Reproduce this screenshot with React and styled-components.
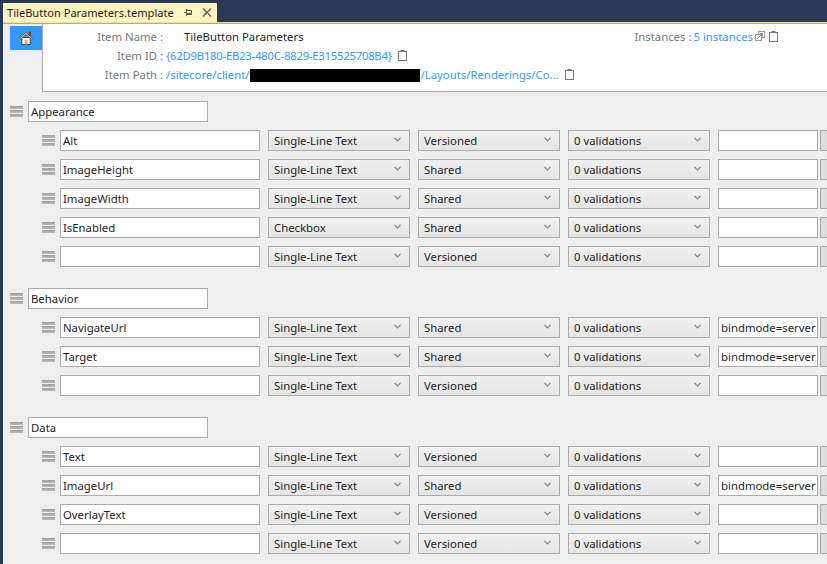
import React from 'react'
import styled, { createGlobalStyle } from 'styled-components'

const GlobalStyle = createGlobalStyle`
  html, body {
    margin: 0;
    padding: 0;
    height: 100%;
    overflow: hidden;
    background: #2a3a56;
  }
  #root { height: 100%; }
`

const Window = styled.div`
  width: 827px;
  height: 564px;
  display: flex;
  flex-direction: column;
  overflow: hidden;
  background: #2a3a56;
  font-family: "Noto Sans", "Open Sans", sans-serif;
  font-size: 11.35px;
  color: #1e1e1e;
`

const TabStrip = styled.div`
  height: 22px;
  flex: none;
  padding: 3px 0 0 3px;
  box-sizing: border-box;
`

const Tab = styled.div`
  width: 214px;
  height: 19px;
  box-sizing: border-box;
  background: #fdf4bf;
  color: #1e1e1e;
  display: flex;
  align-items: center;
  padding-left: 4px;
  white-space: nowrap;
  font-size: 11.1px;
`

const TabTitle = styled.span`
  flex: 1;
`

const TabIcons = styled.span`
  display: flex;
  align-items: center;
  gap: 10px;
  margin-right: 5px;
`

const Content = styled.div`
  flex: 1;
  margin-left: 3px;
  background: #eeeeee;
  border-top: 1px solid #f1e27c;
  box-shadow: inset 0 1px 0 #aaaaaa;
  min-height: 0;
  overflow: hidden;
`

const Header = styled.div`
  display: flex;
  margin: 1px 0 0 7px;
  align-items: flex-start;
`

const HomeButton = styled.div`
  width: 32px;
  height: 24px;
  margin-top: 2px;
  background: #3399ff;
  display: flex;
  align-items: center;
  justify-content: center;
  flex: none;
`

const InfoBox = styled.div`
  flex: 1;
  height: 68px;
  box-sizing: border-box;
  background: #fff;
  border-left: 1px solid #aaaaaa;
  border-bottom: 1px solid #aaaaaa;
  display: flex;
  justify-content: space-between;
  padding-top: 3px;
`

const InfoRows = styled.div`
  display: flex;
  flex-direction: column;
`

const InfoRow = styled.div`
  display: flex;
  height: 19px;
  align-items: center;
  white-space: nowrap;
`

const InfoLabel = styled.span`
  width: 120px;
  text-align: right;
  color: #777777;
  margin-right: 3px;
  flex: none;
`

const InfoValue = styled.span`
  color: ${({ $link }) => ($link ? '#3399ff' : '#1e1e1e')};
  margin-left: ${({ $indent }) => $indent || 0}px;
  letter-spacing: ${({ $tight }) => ($tight ? '-0.26px' : 'normal')};
`

const Redacted = styled.span`
  display: inline-block;
  width: 170px;
  height: 13px;
  margin-left: 1px;
  background: #000;
  vertical-align: -3px;
`

const ClipIcon = styled.svg`
  width: 9px;
  height: 11px;
  margin-left: ${({ $gap }) => $gap || 6}px;
  margin-top: -1px;
  flex: none;
`

const Instances = styled.div`
  display: flex;
  align-items: center;
  height: 19px;
  margin-right: 49px;
  white-space: nowrap;
`

const InstLabel = styled.span`
  color: #777777;
  margin-right: 2px;
`

const Sections = styled.div`
  padding: 9px 0 0 7px;
  display: flex;
  flex-direction: column;
  gap: 21px;
`

const Section = styled.div`
  display: flex;
  flex-direction: column;
  gap: 8px;
`

const TitleRow = styled.div`
  display: flex;
  align-items: center;
  gap: 5px;
  height: 21px;
`

const Rows = styled.div`
  display: flex;
  flex-direction: column;
  gap: 8px;
  padding-left: 32px;
`

const Row = styled.div`
  display: flex;
  align-items: center;
  height: 21px;
  width: 800px;
`

const Handle = styled.div`
  width: 13px;
  height: 11px;
  flex: none;
  display: flex;
  flex-direction: column;
  justify-content: space-between;
  margin-right: ${({ $mr }) => $mr || 0}px;
  & > i {
    display: block;
    height: 3px;
    background: linear-gradient(#9c9c9c, #bdbdbd);
  }
`

const TextBox = styled.div`
  width: ${({ $w }) => $w}px;
  height: 21px;
  box-sizing: border-box;
  flex: none;
  background: #fff;
  border: 1px solid #aaaaaa;
  padding-left: 2px;
  margin-right: ${({ $mr }) => $mr || 0}px;
  line-height: 19px;
  white-space: nowrap;
  overflow: hidden;
`

const SelectBox = styled.div`
  width: 142px;
  height: 21px;
  box-sizing: border-box;
  flex: none;
  background: linear-gradient(#f0f0f0, #e4e4e4);
  border: 1px solid #aaaaaa;
  margin-right: 8px;
  padding: 0 8px 0 5px;
  display: flex;
  align-items: center;
  justify-content: space-between;
  white-space: nowrap;
`

const ChevronIcon = styled.svg`
  margin-top: -3px;
  flex: none;
`

const SideButton = styled.div`
  width: 20px;
  height: 21px;
  box-sizing: border-box;
  flex: none;
  margin-left: 2px;
  background: #dddddd;
  border: 1px solid #aaaaaa;
`

const Chevron = () => (
  <ChevronIcon width="7" height="5" viewBox="0 0 7 5">
    <path d="M0.5 0.8 L3.5 3.8 L6.5 0.8" fill="none" stroke="#808080" strokeWidth="1.2" />
  </ChevronIcon>
)

const Clipboard = ({ gap }) => (
  <ClipIcon $gap={gap} viewBox="0 0 9 11">
    <rect x="0.5" y="1.5" width="8" height="9" fill="none" stroke="#777" />
    <rect x="2.5" y="0" width="4" height="2" fill="#777" />
  </ClipIcon>
)

const ExternalSvg = styled.svg`
  margin: -2px 0 0 2px;
  flex: none;
`

const ExternalIcon = () => (
  <ExternalSvg width="10" height="10" viewBox="0 0 10 10">
    <rect x="3.5" y="0.5" width="6" height="6" fill="#fff" stroke="#999" />
    <rect x="0.5" y="3.5" width="6" height="6" fill="#fff" stroke="#999" />
    <path d="M2 8 L7 3 M4.5 2.5 H7.5 V5.5" fill="none" stroke="#888" />
  </ExternalSvg>
)

const HomeIcon = () => (
  <svg width="14" height="14" viewBox="0 0 14 14">
    <rect x="10" y="0.5" width="2" height="4.5" fill="#8a2f22" />
    <rect x="2.8" y="6.5" width="8.4" height="7" fill="#fffdf2" stroke="#2a2a2a" strokeWidth="0.8" />
    <rect x="5.8" y="9" width="2.6" height="4.5" fill="#e8b030" />
    <path d="M0.5 7.4 L7 1 L13.5 7.4 L12.2 8.2 L7 3.4 L1.8 8.2 Z" fill="#eeb44a" stroke="#4a3516" strokeWidth="0.6" />
  </svg>
)

const PinIcon = () => (
  <svg width="8" height="7" viewBox="0 0 8 7">
    <path d="M0 3.5 H2 M2.5 0 V7 M2.5 1.5 H7.5 V5.5 H2.5 M2.5 4.5 H7.5" fill="none" stroke="#5a5a50" />
  </svg>
)

const CloseIcon = () => (
  <svg width="10" height="9" viewBox="0 0 10 9">
    <path d="M1 0.5 L9 8.5 M9 0.5 L1 8.5" fill="none" stroke="#6b6b60" strokeWidth="1.6" />
  </svg>
)

const sections = [
  {
    title: 'Appearance',
    rows: [
      ['Alt', 'Single-Line Text', 'Versioned', ''],
      ['ImageHeight', 'Single-Line Text', 'Shared', ''],
      ['ImageWidth', 'Single-Line Text', 'Shared', ''],
      ['IsEnabled', 'Checkbox', 'Shared', ''],
      ['', 'Single-Line Text', 'Versioned', ''],
    ],
  },
  {
    title: 'Behavior',
    rows: [
      ['NavigateUrl', 'Single-Line Text', 'Shared', 'bindmode=server'],
      ['Target', 'Single-Line Text', 'Shared', 'bindmode=server'],
      ['', 'Single-Line Text', 'Versioned', ''],
    ],
  },
  {
    title: 'Data',
    rows: [
      ['Text', 'Single-Line Text', 'Versioned', ''],
      ['ImageUrl', 'Single-Line Text', 'Shared', 'bindmode=server'],
      ['OverlayText', 'Single-Line Text', 'Versioned', ''],
      ['', 'Single-Line Text', 'Versioned', ''],
    ],
  },
]

const Grip = ({ mr }) => (
  <Handle $mr={mr}>
    <i />
    <i />
    <i />
  </Handle>
)

const Select = ({ children }) => (
  <SelectBox>
    <span>{children}</span>
    <Chevron />
  </SelectBox>
)

export default function App() {
  return (
    <Window>
      <GlobalStyle />
      <TabStrip>
        <Tab>
          <TabTitle>TileButton Parameters.template</TabTitle>
          <TabIcons>
            <PinIcon />
            <CloseIcon />
          </TabIcons>
        </Tab>
      </TabStrip>
      <Content>
        <Header>
          <HomeButton>
            <HomeIcon />
          </HomeButton>
          <InfoBox>
            <InfoRows>
              <InfoRow>
                <InfoLabel>Item Name :</InfoLabel>
                <InfoValue $indent={18}>TileButton Parameters</InfoValue>
              </InfoRow>
              <InfoRow>
                <InfoLabel>Item ID :</InfoLabel>
                <InfoValue $link $tight>{'{62D9B180-EB23-480C-8829-E315525708B4}'}</InfoValue>
                <Clipboard />
              </InfoRow>
              <InfoRow>
                <InfoLabel>Item Path :</InfoLabel>
                <InfoValue $link>
                  /sitecore/client/<Redacted />/Layouts/Renderings/Co...
                </InfoValue>
                <Clipboard />
              </InfoRow>
            </InfoRows>
            <Instances>
              <InstLabel>Instances :</InstLabel>
              <InfoValue $link>5 instances</InfoValue>
              <ExternalIcon />
              <Clipboard gap={4} />
            </Instances>
          </InfoBox>
        </Header>
        <Sections>
          {sections.map((section) => (
            <Section key={section.title}>
              <TitleRow>
                <Grip />
                <TextBox $w={180}>{section.title}</TextBox>
              </TitleRow>
              <Rows>
                {section.rows.map((row, i) => (
                  <Row key={i}>
                    <Grip mr={5} />
                    <TextBox $w={200} $mr={8}>{row[0]}</TextBox>
                    <Select>{row[1]}</Select>
                    <Select>{row[2]}</Select>
                    <Select>0 validations</Select>
                    <TextBox $w={100}>{row[3]}</TextBox>
                    <SideButton />
                  </Row>
                ))}
              </Rows>
            </Section>
          ))}
        </Sections>
      </Content>
    </Window>
  )
}
